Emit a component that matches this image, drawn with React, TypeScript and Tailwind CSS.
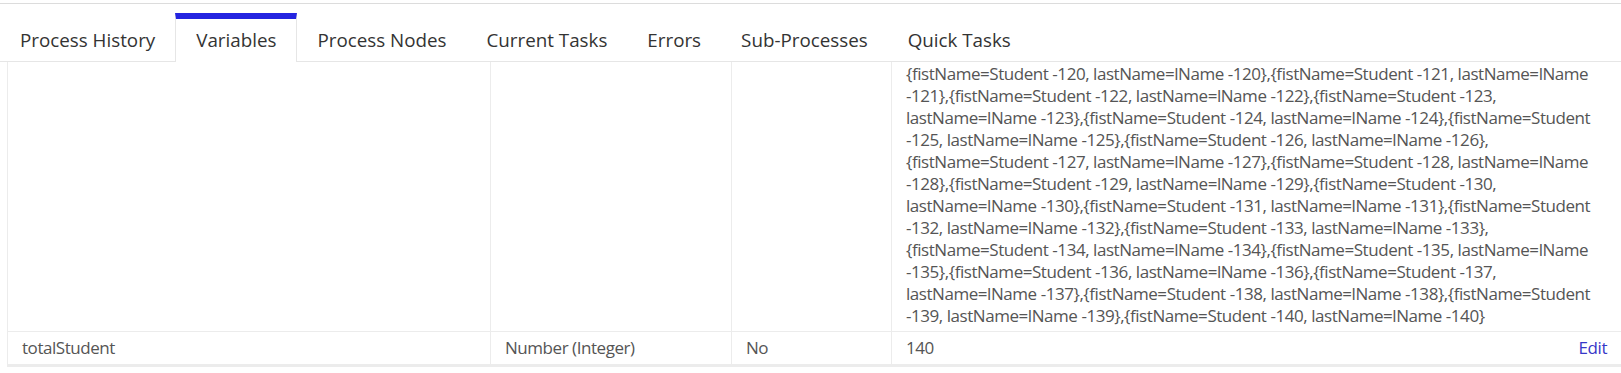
import React from "react";

const tabs = [
  "Process History",
  "Variables",
  "Process Nodes",
  "Current Tasks",
  "Errors",
  "Sub-Processes",
  "Quick Tasks",
];

// value of the "students" variable, wrapped as in the cell
const studentLines = [
  "{fistName=Student -120, lastName=lName -120},{fistName=Student -121, lastName=lName",
  "-121},{fistName=Student -122, lastName=lName -122},{fistName=Student -123,",
  "lastName=lName -123},{fistName=Student -124, lastName=lName -124},{fistName=Student",
  "-125, lastName=lName -125},{fistName=Student -126, lastName=lName -126},",
  "{fistName=Student -127, lastName=lName -127},{fistName=Student -128, lastName=lName",
  "-128},{fistName=Student -129, lastName=lName -129},{fistName=Student -130,",
  "lastName=lName -130},{fistName=Student -131, lastName=lName -131},{fistName=Student",
  "-132, lastName=lName -132},{fistName=Student -133, lastName=lName -133},",
  "{fistName=Student -134, lastName=lName -134},{fistName=Student -135, lastName=lName",
  "-135},{fistName=Student -136, lastName=lName -136},{fistName=Student -137,",
  "lastName=lName -137},{fistName=Student -138, lastName=lName -138},{fistName=Student",
  "-139, lastName=lName -139},{fistName=Student -140, lastName=lName -140}",
];

const App = () => {
  return (
    <div className="w-full h-[373px] overflow-hidden bg-white font-['Open_Sans',sans-serif] pt-[3px]">
      <div className="border-t border-[#dcdcdc]" />

      {/* Tabs */}
      <div className="mt-[9px] flex border-b border-[#e6e6e6]">
        {tabs.map((t) => {
          const active = t === "Variables";
          return (
            <div
              key={t}
              className={
                active
                  ? "-mb-px border-x border-t-[6px] border-x-[#e6e6e6] border-t-[#2424e0] bg-white px-5 pt-[9px] pb-[10px] text-[18.8px] leading-6 text-[#333]"
                  : "border-t-[6px] border-t-transparent px-5 pt-[9px] pb-[9px] text-[18.8px] leading-6 text-[#333]"
              }
            >
              {t}
            </div>
          );
        })}
      </div>

      {/* Variables table */}
      <div className="ml-[7px] border-l border-b-[3px] border-[#ececec] text-[17px] leading-[22px] tracking-[-0.45px] text-[#555] font-stretch-[90%]">
        <div className="grid grid-cols-[482px_241px_160px_1fr]">
          <div className="px-3.5" />
          <div className="border-l border-[#ececec] px-3.5" />
          <div className="border-l border-[#ececec] px-3.5" />
          <div className="border-l border-[#ececec] px-3.5 pt-px pb-1">
            {studentLines.map((l, i) => (
              <div key={i} className="whitespace-nowrap">
                {l}
              </div>
            ))}
          </div>
        </div>
        <div className="grid grid-cols-[482px_241px_160px_1fr] border-t border-[#ececec]">
          <div className="px-3.5 py-[5px]">totalStudent</div>
          <div className="border-l border-[#ececec] px-3.5 py-[5px]">Number (Integer)</div>
          <div className="border-l border-[#ececec] px-3.5 py-[5px]">No</div>
          <div className="flex justify-between border-l border-[#ececec] px-3.5 py-[5px]">
            <span>140</span>
            <a className="text-[#3737c8]" href="#">
              Edit
            </a>
          </div>
        </div>
      </div>
    </div>
  );
};

export default App;
